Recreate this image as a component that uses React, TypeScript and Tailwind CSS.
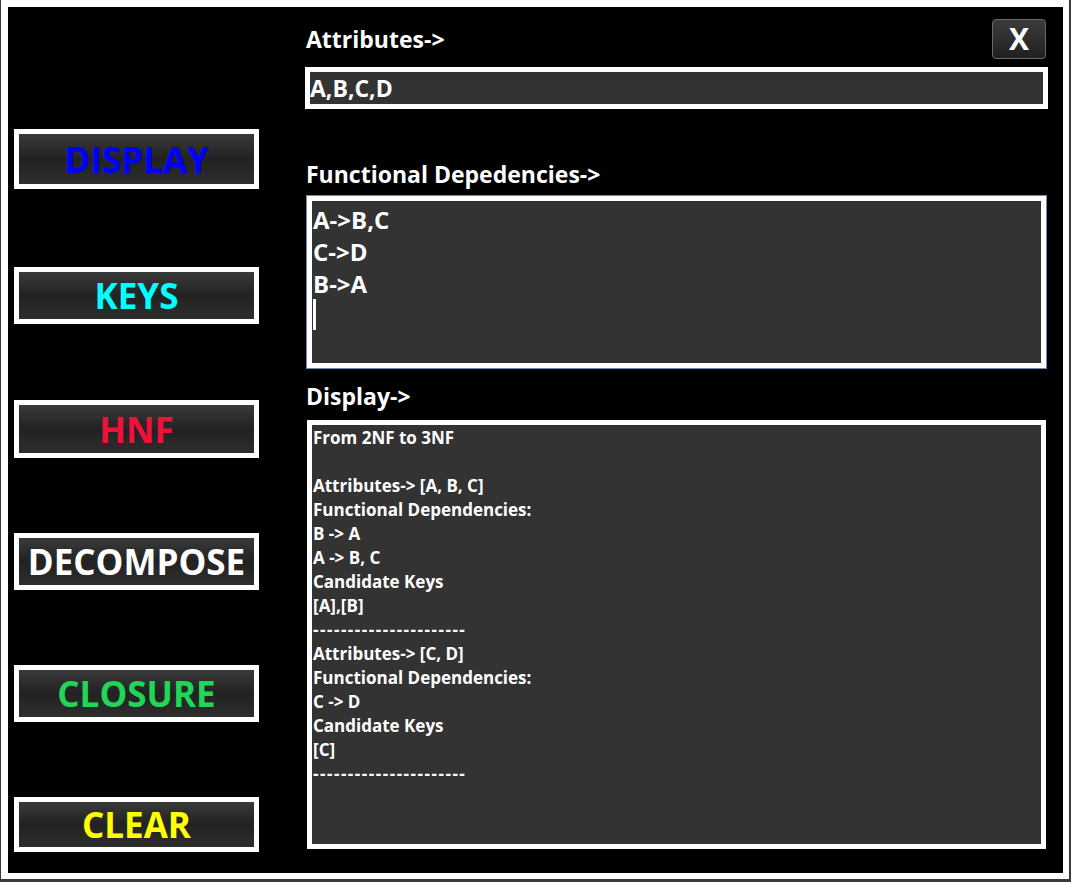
import React from "react";

const font = { fontFamily: '"Open Sans", "Noto Sans", sans-serif' };

type Btn = { label: string; color: string; mt: string; h: string };

const buttons: Btn[] = [
  { label: "DISPLAY", color: "text-[#0000ff]", mt: "mt-[122px]", h: "h-[60px]" },
  { label: "KEYS", color: "text-[#00ffff]", mt: "mt-[78px]", h: "h-[57px]" },
  { label: "HNF", color: "text-[#f0103a]", mt: "mt-[76px]", h: "h-[58px]" },
  { label: "DECOMPOSE", color: "text-white", mt: "mt-[75px]", h: "h-[57px]" },
  { label: "CLOSURE", color: "text-[#1fd655]", mt: "mt-[75px]", h: "h-[57px]" },
  { label: "CLEAR", color: "text-[#ffff00]", mt: "mt-[75px]", h: "h-[55px]" },
];

const output = [
  "From 2NF to 3NF",
  "",
  "Attributes-> [A, B, C]",
  "Functional Dependencies:",
  "B -> A",
  "A -> B, C",
  "Candidate Keys",
  "[A],[B]",
  "----------------------",
  "Attributes-> [C, D]",
  "Functional Dependencies:",
  "C -> D",
  "Candidate Keys",
  "[C]",
  "----------------------",
];

export default function App() {
  return (
    <div className="w-[1071px] h-[882px] bg-[#3a3a3a] overflow-hidden" style={font}>
      <div className="ml-[1px] w-[1068px] h-[879px] border-[7px] border-white border-r-[6px] border-b-[6px] bg-black flex">
        {/* left buttons */}
        <div className="w-[297px] pl-[6px] flex flex-col">
          {buttons.map((b) => (
            <button
              key={b.label}
              className={`${b.mt} ${b.h} w-[245px] border-[5px] border-white bg-gradient-to-b from-[#3a3a3a] via-[#222222] to-[#2e2e2e] flex items-center justify-center`}
            >
              <span className={`${b.color} text-[35px] font-bold leading-none`}>
                {b.label}
              </span>
            </button>
          ))}
        </div>

        {/* right side */}
        <div className="w-[743px] flex flex-col">
          <div className="flex items-start justify-between h-[60px]">
            <div className="mt-[17px] text-white font-bold text-[23px] leading-[30px] pl-[1px]">
              Attributes-&gt;
            </div>
            <button className="mt-[12px] mr-[2px] w-[54px] h-[40px] rounded-[4px] border border-[#6a6a6a] bg-gradient-to-b from-[#3c3c3c] to-[#202020] text-white font-bold text-[30px] leading-none flex items-center justify-center">
              X
            </button>
          </div>
          <div className="h-[42px] border-[5px] border-white bg-[#333333] flex items-center pl-[0px] text-white font-bold text-[23px]">
            A,B,C,D
          </div>

          <div className="mt-[50px] text-white font-bold text-[23px] leading-[30px] pl-[1px]">
            Functional Depedencies-&gt;
          </div>
          <div className="mt-[6px] ml-[1px] w-[741px] h-[174px] border border-[#6e8fb5]">
            <div className="h-full border-[5px] border-white bg-[#333333] pl-[1px] pt-[3px] text-white font-bold text-[24px] leading-[32px]">
              <div>A-&gt;B,C</div>
              <div>C-&gt;D</div>
              <div>B-&gt;A</div>
              <div className="w-[3px] h-[31px] bg-white -mt-[1px]" />
            </div>
          </div>

          <div className="mt-[12px] text-white font-bold text-[23px] leading-[30px] pl-[1px]">
            Display-&gt;
          </div>
          <div className="mt-[9px] ml-[2px] w-[739px] h-[429px] border-[5px] border-white bg-[#333333] pl-[1px] pt-[1px] text-white font-bold text-[17px] leading-[24px]">
            {output.map((l, i) => (
              <div
                key={i}
                className={`h-[24px] whitespace-pre ${l.startsWith("---") ? "tracking-[1.5px]" : ""}`}
              >
                {l}
              </div>
            ))}
          </div>
        </div>
      </div>
    </div>
  );
}
